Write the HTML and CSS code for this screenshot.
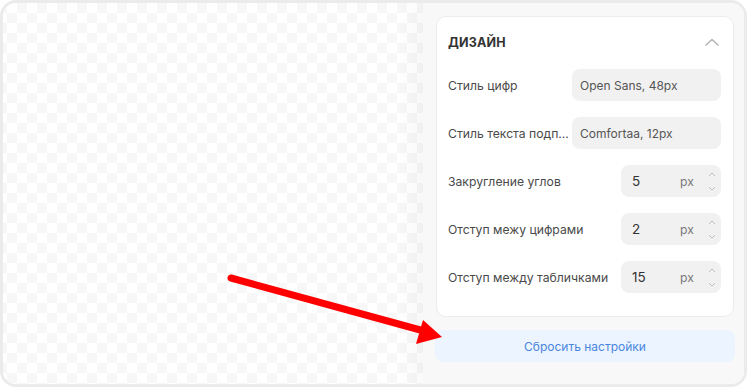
FILE: index.html
```html
<!DOCTYPE html>
<html lang="ru">
<head>
<meta charset="utf-8">
<link rel="stylesheet" href="styles.css">
</head>
<body>
<div class="frame">
  <div class="canvas"></div>
  <div class="panel">
    <div class="card">
      <div class="card-head">
        <span class="title">ДИЗАЙН</span>
        <svg class="chev" width="14" height="8" viewBox="0 0 14 8"><path d="M1 7 L7 1.5 L13 7" fill="none" stroke="#acacac" stroke-width="1.3" stroke-linecap="round" stroke-linejoin="round"/></svg>
      </div>
      <div class="rows">
        <div class="row">
          <span class="label">Стиль цифр</span>
          <div class="field text">Open Sans, 48px</div>
        </div>
        <div class="row">
          <span class="label short">Стиль текста подписей</span>
          <div class="field text">Comfortaa, 12px</div>
        </div>
        <div class="row">
          <span class="label">Закругление углов</span>
          <div class="field num"><span class="val">5</span><span class="unit">px</span><span class="spin"><svg width="8" height="5" viewBox="0 0 8 5"><path d="M1 4 L4 1 L7 4" fill="none" stroke="#bdbdbd" stroke-width="1"/></svg><svg width="8" height="5" viewBox="0 0 8 5"><path d="M1 1 L4 4 L7 1" fill="none" stroke="#bdbdbd" stroke-width="1"/></svg></span></div>
        </div>
        <div class="row">
          <span class="label">Отступ межу цифрами</span>
          <div class="field num"><span class="val">2</span><span class="unit">px</span><span class="spin"><svg width="8" height="5" viewBox="0 0 8 5"><path d="M1 4 L4 1 L7 4" fill="none" stroke="#bdbdbd" stroke-width="1"/></svg><svg width="8" height="5" viewBox="0 0 8 5"><path d="M1 1 L4 4 L7 1" fill="none" stroke="#bdbdbd" stroke-width="1"/></svg></span></div>
        </div>
        <div class="row">
          <span class="label">Отступ между табличками</span>
          <div class="field num"><span class="val">15</span><span class="unit">px</span><span class="spin"><svg width="8" height="5" viewBox="0 0 8 5"><path d="M1 4 L4 1 L7 4" fill="none" stroke="#bdbdbd" stroke-width="1"/></svg><svg width="8" height="5" viewBox="0 0 8 5"><path d="M1 1 L4 4 L7 1" fill="none" stroke="#bdbdbd" stroke-width="1"/></svg></span></div>
        </div>
      </div>
    </div>
    <button class="reset">Сбросить настройки</button>
  </div>
  <svg class="arrow" width="747" height="387" viewBox="0 0 747 387">
    <line x1="231" y1="278" x2="424" y2="331" stroke="#ff0000" stroke-width="7" stroke-linecap="round"/>
    <polygon points="423,320 442,337 416,344" fill="#ff0000"/>
  </svg>
</div>
</body>
</html>
```

FILE: styles.css
```css
* { box-sizing: border-box; }
html, body { margin: 0; padding: 0; }
body {
  font-family: Inter, "Noto Sans", sans-serif;
  background: #fff;
}
.frame {
  position: relative;
  width: 747px;
  height: 387px;
  border: 3px solid #ebebeb;
  border-radius: 16px;
  overflow: hidden;
  display: flex;
}
.canvas {
  flex: 1;
  background: repeating-conic-gradient(#f7f7f7 0 25%, #ffffff 0 50%) 4px 0 / 20px 20px;
}
.panel {
  width: 321px;
  background: #f8f8f8;
  padding: 13px 10px 0 13px;
  box-shadow: -8px 0 22px rgba(0, 0, 0, 0.045);
  display: flex;
  flex-direction: column;
  gap: 13px;
}
.card {
  background: #fff;
  border: 1px solid #ececec;
  border-radius: 10px;
  padding: 13px 12px 23px 11px;
}
.card-head {
  height: 24px;
  display: flex;
  align-items: center;
  justify-content: space-between;
}
.title {
  font-size: 12.5px;
  font-weight: 700;
  color: #333;
  letter-spacing: 0.2px;
}
.chev { margin-right: 2px; }
.rows {
  margin-top: 15px;
  display: flex;
  flex-direction: column;
  gap: 16px;
}
.row {
  height: 32px;
  display: flex;
  align-items: center;
  justify-content: space-between;
}
.label {
  font-size: 12.2px;
  color: #4a4a4a;
  white-space: nowrap;
  overflow: hidden;
  text-overflow: ellipsis;
  max-width: 170px;
}
.label.short { max-width: 121px; }
.field {
  height: 32px;
  background: #f1f1f1;
  border-radius: 8px;
  font-size: 12px;
  color: #555;
  display: flex;
  align-items: center;
}
.field.text {
  width: 149px;
  padding-left: 8px;
}
.field.num {
  width: 100px;
  padding-left: 11px;
  color: #333;
  font-size: 13.5px;
}
.val { width: 48px; }
.unit { color: #777; font-size: 12.2px; width: 28px; }
.spin {
  display: flex;
  flex-direction: column;
  gap: 9px;
}
.reset {
  height: 32px;
  border: none;
  border-radius: 8px;
  background: #ebf4ff;
  color: #4a86e0;
  font-family: Inter, "Noto Sans", sans-serif;
  font-size: 12px;
  margin-left: -1px;
  width: 300px;
}
.arrow {
  position: absolute;
  left: -3px;
  top: -3px;
  pointer-events: none;
}
```
